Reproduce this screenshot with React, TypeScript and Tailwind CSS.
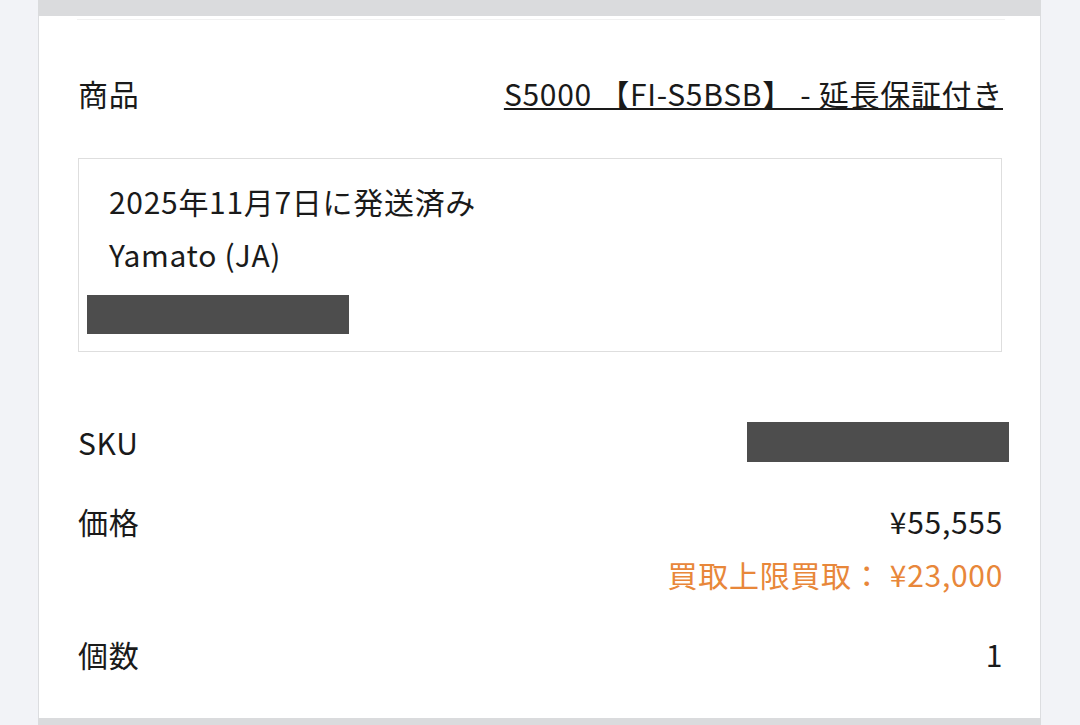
export default function App() {
  const font = { fontFamily: '"Noto Sans CJK JP", "Noto Sans", sans-serif' };
  return (
    <div className="w-[1080px] h-[725px] bg-[#f2f3f7] overflow-hidden" style={font}>
      <div className="ml-[38px] w-[1003px] h-full flex flex-col">
        <div className="h-[16px] bg-[#dadbdd] shrink-0" />
        <div className="flex-1 bg-white border-x border-[#dcdde0] flex flex-col pl-[39px] pr-[37px] text-[30px] leading-[40px] tracking-[0.7px] text-[#1a1a1a]">
          <div className="h-[4px] border-b border-[#f1f1f1] -ml-[1px] -mr-[2px]" />
          <div className="flex justify-between items-center mt-[53px]">
            <span>商品</span>
            <span className="underline decoration-[1.5px] underline-offset-[2px]">S5000 【FI-S5BSB】 - 延長保証付き</span>
          </div>
          <div className="mt-[45px] mr-[1px] border border-[#dedede] h-[194px] flex flex-col pt-[22px] pl-[30px]">
            <div>2025年11月7日に発送済み</div>
            <div className="mt-[13px]">Yamato (JA)</div>
            <div className="mt-[21px] -ml-[22px] w-[262px] h-[39px] bg-[#4d4d4d]" />
          </div>
          <div className="mt-[69px] flex justify-between items-center">
            <span>SKU</span>
            <div className="w-[262px] h-[40px] bg-[#4d4d4d] -mr-[6px] mt-[1px]" />
          </div>
          <div className="mt-[39px] flex justify-between items-center">
            <span>価格</span>
            <span>¥55,555</span>
          </div>
          <div className="mt-[13px] text-right text-[#e8873a]">買取上限買取： ¥23,000</div>
          <div className="mt-[40px] flex justify-between items-center">
            <span>個数</span>
            <span>1</span>
          </div>
        </div>
        <div className="h-[7px] bg-[#dadbdd] shrink-0" />
      </div>
    </div>
  );
}
